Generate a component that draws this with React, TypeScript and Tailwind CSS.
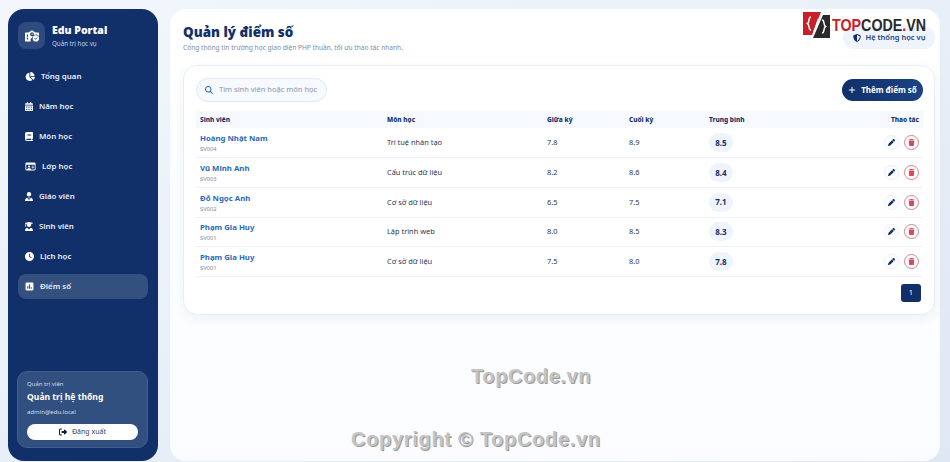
import React from "react";
import {
  FaChartPie, FaCalendarDays, FaBook, FaRegIdCard, FaUserTie, FaUserGraduate,
  FaClock, FaSquarePollVertical, FaSchoolCircleCheck, FaShieldHalved, FaPlus, FaPen, FaTrash, FaMagnifyingGlass, FaRightFromBracket,
} from "react-icons/fa6";

const nav = [
  { label: "Tổng quan", Icon: FaChartPie, w: "w-[10px]" },
  { label: "Năm học", Icon: FaCalendarDays, w: "w-[8px]" },
  { label: "Môn học", Icon: FaBook, w: "w-[8px]" },
  { label: "Lớp học", Icon: FaRegIdCard, w: "w-[11px]" },
  { label: "Giáo viên", Icon: FaUserTie, w: "w-[8px]" },
  { label: "Sinh viên", Icon: FaUserGraduate, w: "w-[8px]" },
  { label: "Lịch học", Icon: FaClock, w: "w-[9px]" },
  { label: "Điểm số", Icon: FaSquarePollVertical, w: "w-[9px]", active: true },
];

const rows = [
  ["Hoàng Nhật Nam", "SV004", "Trí tuệ nhân tạo", "7.8", "8.9", "8.5"],
  ["Vũ Minh Anh", "SV003", "Cấu trúc dữ liệu", "8.2", "8.6", "8.4"],
  ["Đỗ Ngọc Anh", "SV002", "Cơ sở dữ liệu", "6.5", "7.5", "7.1"],
  ["Phạm Gia Huy", "SV001", "Lập trình web", "8.0", "8.5", "8.3"],
  ["Phạm Gia Huy", "SV001", "Cơ sở dữ liệu", "7.5", "8.0", "7.8"],
];

export default function App() {
  return (
    <div className="relative w-[950px] h-[462px] overflow-hidden flex gap-3 pl-[8px] pr-[10px] pt-[9px] bg-gradient-to-br from-[#f3f7fd] to-[#dfe7f3] font-['Noto_Sans',sans-serif]">
      <aside className="w-[150px] h-[452px] shrink-0 rounded-[16px] bg-[#113069] text-white flex flex-col px-[10px] pt-[13px] pb-[13px]">
        <div className="flex items-center gap-[7px]">
          <div className="w-[27px] h-[27px] rounded-lg bg-[#2e4a7f] flex items-center justify-center">
            <FaSchoolCircleCheck className="text-[14px]" />
          </div>
          <div>
            <div className="text-[10.5px] leading-[14px] font-black">Edu Portal</div>
            <div className="text-[6.2px] leading-[10px] mt-[2px] text-[#c9d5e8]">Quản trị học vụ</div>
          </div>
        </div>
        <nav className="mt-[15px] flex flex-col gap-[5px]">
          {nav.map(({ label, Icon, w, active }) => (
            <div key={label} className={`h-[25px] pl-[7px] rounded-[8px] flex items-center gap-[6px] text-[7.9px] font-semibold text-[#e8eef7] ${active ? "bg-[#34507f]" : ""}`}>
              <Icon className={`${w} h-[9px] text-white shrink-0`} />
              <span>{label}</span>
            </div>
          ))}
        </nav>
        <div className="mt-auto rounded-[10px] bg-[#32507f] border border-[#42608f] px-[9px] pt-[8px] pb-[7px] -ml-[1px]">
          <div className="text-[6px] leading-[9px] text-[#d5deec]">Quản trị viên</div>
          <div className="text-[8.6px] leading-[13px] mt-[2px] font-bold">Quản trị hệ thống</div>
          <div className="text-[6px] leading-[9px] mt-[4px] text-[#d5deec]">admin@edu.local</div>
          <div className="mt-[7px] h-[16px] rounded-full bg-white text-[#34415a] flex items-center justify-center gap-[5px] text-[7px]">
            <FaRightFromBracket className="text-[8px] text-[#111827]" />
            <span>Đăng xuất</span>
          </div>
        </div>
      </aside>

      <main className="w-[770px] h-[452px] shrink-0 rounded-[16px] bg-gradient-to-b from-white to-[#fafcff] pl-[13px] pr-[5px] pt-[14px]">
        <div className="flex justify-between items-start h-[42px]">
          <div>
            <h1 className="text-[13.4px] leading-[18px] font-black text-[#113069]">Quản lý điểm số</h1>
            <p className="text-[6.6px] leading-[10px] mt-[2px] text-[#7d8ca5]">Cổng thông tin trường học giao diện PHP thuần, tối ưu thao tác nhanh.</p>
          </div>
          <div className="h-[23px] w-[92px] rounded-full mt-[3px] bg-[#eef3fc] flex items-center justify-center gap-[5px] text-[7.5px] leading-none font-semibold text-[#274272]">
            <FaShieldHalved className="text-[8px] text-[#113069]" />
            <span>Hệ thống học vụ</span>
          </div>
        </div>
        <section className="h-[250px] rounded-[14px] bg-white border border-[#e8eef7] shadow-[0_4px_12px_rgba(17,48,105,0.06)] pl-3 pr-[11px] pt-3">
          <div className="flex items-center justify-between h-[24px]">
            <div className="w-[131px] h-[24px] rounded-full bg-[#f6f9fd] border border-[#e1e9f4] flex items-center pl-2 gap-[6px] text-[7.5px] text-[#8a97aa]">
              <FaMagnifyingGlass className="text-[8px] text-[#2f6bb5]" />
              <span>Tìm sinh viên hoặc môn học</span>
            </div>
            <div className="w-[81px] h-[22px] rounded-full bg-gradient-to-r from-[#113069] to-[#1b4383] text-white flex items-center justify-center gap-[5px] text-[8px] font-bold">
              <FaPlus className="text-[8px]" />
              <span>Thêm điểm số</span>
            </div>
          </div>
          <table className="w-[727px] mt-[9px] table-fixed border-collapse">
            <colgroup>
              <col className="w-[187px]" /><col className="w-[160px]" /><col className="w-[82px]" /><col className="w-[80px]" /><col className="w-[90px]" /><col />
            </colgroup>
            <thead>
              <tr className="h-[17px] bg-[#f6f9fe] text-[6.5px] text-[#113069] text-left">
                <th className="pl-1 font-extrabold">Sinh viên</th><th className="pl-1 font-extrabold">Môn học</th><th className="pl-1 font-extrabold">Giữa kỳ</th><th className="pl-1 font-extrabold">Cuối kỳ</th><th className="pl-1 font-extrabold">Trung bình</th><th className="pr-1 text-right font-extrabold">Thao tác</th>
              </tr>
            </thead>
            <tbody>
              {rows.map((r, i) => (
                <tr key={i} className="h-[29.7px] border-b border-[#eef2f8] text-[7.4px] text-[#2a3650]">
                  <td className="pl-1">
                    <div className="text-[7.8px] leading-[12px] font-bold text-[#2a6ab8]">{r[0]}</div>
                    <div className="text-[5.8px] leading-[8px] mt-[1px] text-[#7d8ca5]">{r[1]}</div>
                  </td>
                  <td className="pl-1">{r[2]}</td>
                  <td className="pl-1">{r[3]}</td>
                  <td className="pl-1">{r[4]}</td>
                  <td className="pl-1">
                    <span className="inline-flex items-center justify-center w-[24px] h-[19px] rounded-full bg-[#eef3fc] text-[8px] font-bold text-[#113069]">{r[5]}</span>
                  </td>
                  <td className="pr-1">
                    <div className="flex justify-end gap-[5px]">
                      <span className="w-[15px] h-[15px] rounded-full border border-[#e8eef7] bg-white flex items-center justify-center">
                        <FaPen className="text-[7px] text-[#113069]" />
                      </span>
                      <span className="w-[15px] h-[15px] rounded-full border border-[#d9838d] bg-white flex items-center justify-center">
                        <FaTrash className="text-[7px] text-[#d9475a]" />
                      </span>
                    </div>
                  </td>
                </tr>
              ))}
            </tbody>
          </table>
          <div className="flex justify-end mt-[7px] pr-[2px]">
            <div className="w-[20px] h-[18px] rounded-[3px] bg-[#113069] text-white text-[7.5px] flex items-center justify-center">1</div>
          </div>
        </section>
      </main>

      <div className="absolute left-[803px] top-[12px] flex items-center">
        <svg width="27" height="26" viewBox="0 0 27 26">
          <polygon points="0,0 18,0 9,23 0,23" fill="#c8202a" />
          <polygon points="20,3 27,3 27,26 10,26" fill="#2a2a2a" />
          <path d="M8 5 C5 5 7 10 4.5 11.5 C7 13 5 18 8 18" stroke="#fff" strokeWidth="1.5" fill="none" />
          <path d="M19 8 C22 8 20 13 22.5 14.5 C20 16 22 21 19 21" stroke="#fff" strokeWidth="1.5" fill="none" />
          <path d="M15.5 7 L11 20" stroke="#fff" strokeWidth="1.6" />
        </svg>
        <span className="ml-[2px] text-[17px] font-bold leading-[13px] font-['Liberation_Sans',sans-serif] [transform:scaleX(0.84)] origin-left">
          <span className="text-[#c8202a]">TOP</span><span className="text-[#2a2a2a]">CODE</span><span className="text-[#c8202a]">.</span><span className="text-[#2a2a2a]">VN</span>
        </span>
      </div>
      <div className="absolute left-[471px] top-[365px] text-[20px] leading-[23px] font-bold tracking-[0.6px] text-[#c4c4c4] [text-shadow:1px_1px_0_#9a9a9a] font-['Liberation_Sans',sans-serif]">TopCode.vn</div>
      <div className="absolute left-[351px] top-[428px] text-[20px] leading-[23px] font-bold tracking-[0.7px] text-[#c4c4c4] [text-shadow:1px_1px_0_#9a9a9a] font-['Liberation_Sans',sans-serif]">Copyright © TopCode.vn</div>
    </div>
  );
}
